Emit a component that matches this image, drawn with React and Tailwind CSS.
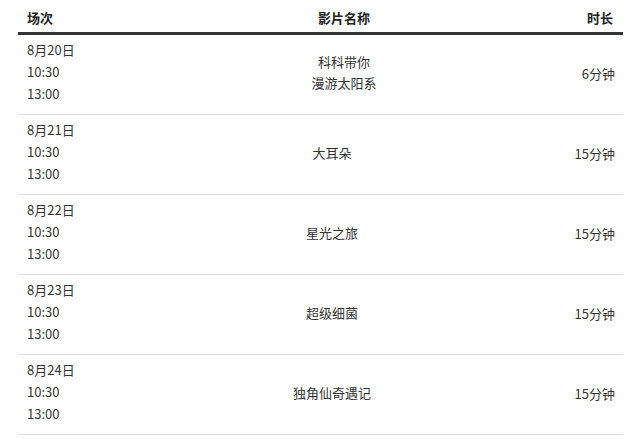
const sessions = [
    { date: "8月20日", title: ["科科带你", "漫游太阳系"], length: "6分钟", shift: false },
    { date: "8月21日", title: ["大耳朵"], length: "15分钟", shift: true },
    { date: "8月22日", title: ["星光之旅"], length: "15分钟", shift: true },
    { date: "8月23日", title: ["超级细菌"], length: "15分钟", shift: true },
    { date: "8月24日", title: ["独角仙奇遇记"], length: "15分钟", shift: true },
]

const App = () => {
    return (
        <div className="bg-white w-[640px] h-[447px] pl-[18px] pr-[17px] text-[13px] leading-[22px] text-[#333] font-['Noto_Sans_CJK_SC',sans-serif]">
            <div className="grid grid-cols-[150px_1fr_103px] border-b-[3px] border-[#333] h-[35px] pt-[7px] font-bold text-[#222]">
                <div className="pl-[9px]">场次</div>
                <div className="text-center">影片名称</div>
                <div className="text-right pr-[10px]">时长</div>
            </div>
            {sessions.map((s, i) => (
                <div key={i} className="grid grid-cols-[150px_1fr_103px] items-center border-b border-[#ddd] h-[80px] pt-[4px] pb-[9px]">
                    <div className="pl-[9px]">
                        <div>{s.date}</div>
                        <div>10:30</div>
                        <div>13:00</div>
                    </div>
                    <div className={s.shift ? "text-center pr-[24px]" : "text-center"}>
                        {s.title.map((t, j) => (
                            <div key={j} className="leading-[21px]">{t}</div>
                        ))}
                    </div>
                    <div className="text-right pr-[8px] pt-[3px]">{s.length}</div>
                </div>
            ))}
        </div>
    );
}

export default App;
